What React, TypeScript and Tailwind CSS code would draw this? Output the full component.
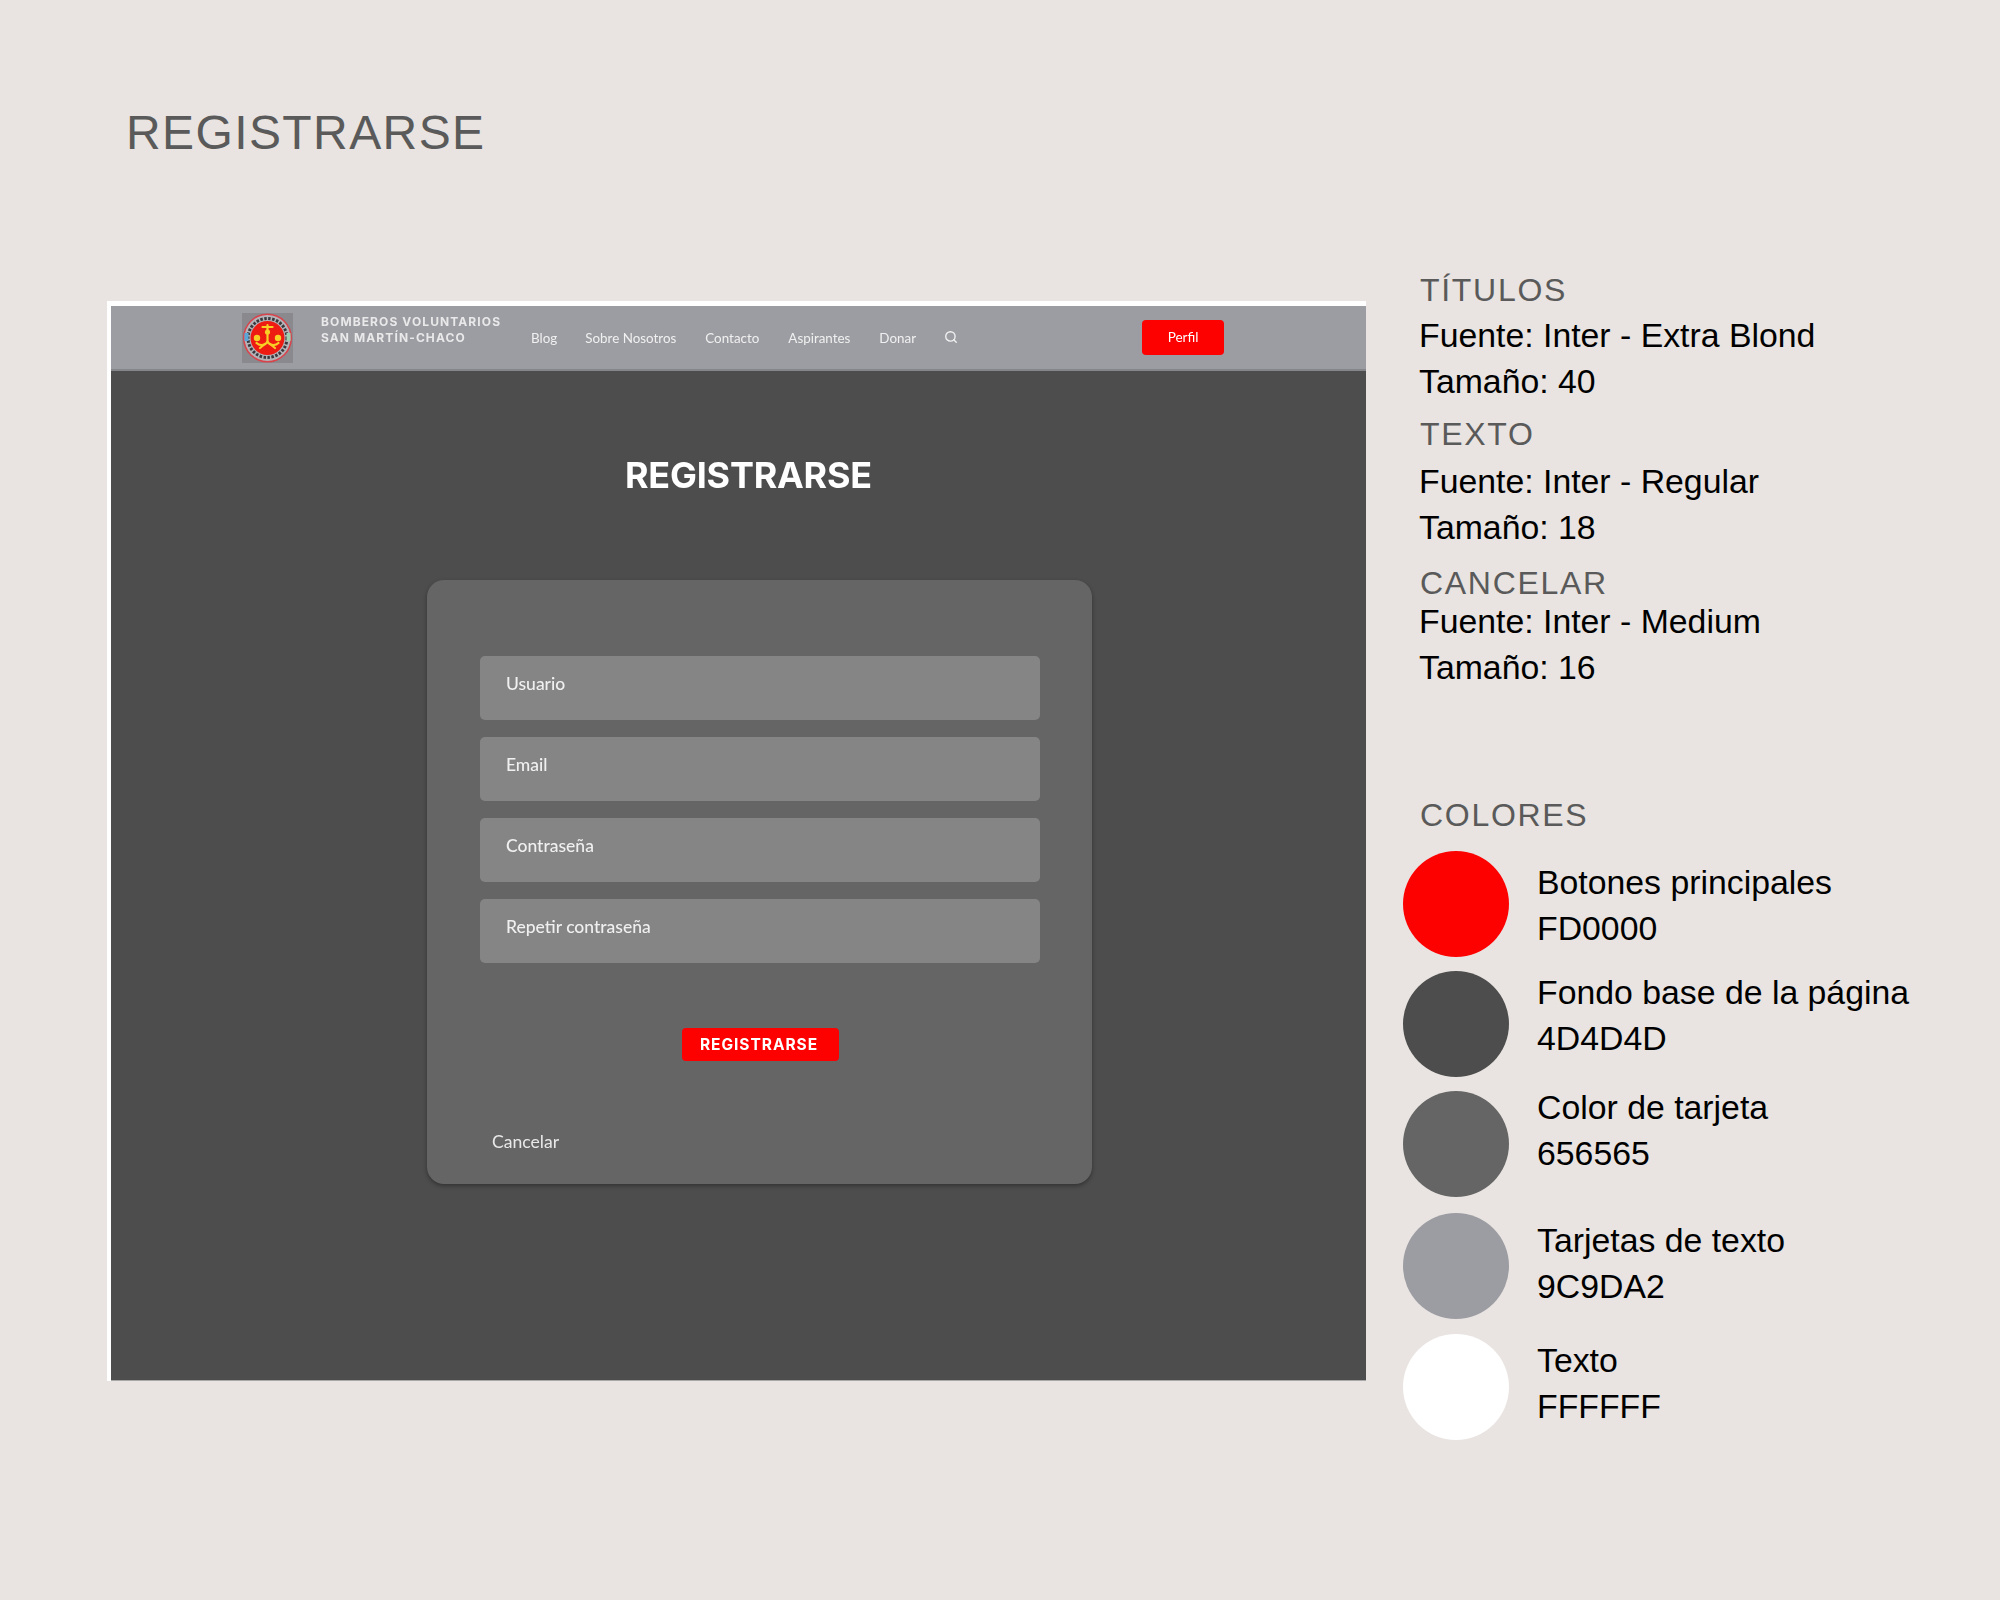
import React from "react";
import { Search } from "lucide-react";

const navLinks = [
  { t: "Blog", c: "ml-[20px]" },
  { t: "Sobre Nosotros", c: "ml-[28px]" },
  { t: "Contacto", c: "ml-[29px]" },
  { t: "Aspirantes", c: "ml-[29px]" },
  { t: "Donar", c: "ml-[29px]" },
];

const fields = ["Usuario", "Email", "Contraseña", "Repetir contraseña"];

const specs = [
  { h: "TÍTULOS", a: "Fuente: Inter - Extra Blond", b: "Tamaño: 40", c: "-mt-[2px]", l: "leading-[44px]" },
  { h: "TEXTO", a: "Fuente: Inter - Regular", b: "Tamaño: 18", c: "mt-[6px]", l: "leading-[48px]" },
  { h: "CANCELAR", a: "Fuente: Inter - Medium", b: "Tamaño: 16", c: "mt-[18px]", l: "leading-[30px]" },
];

const colors = [
  { bg: "bg-[#fd0000]", a: "Botones principales", b: "FD0000", c: "mt-[14px]", t: "mt-[2px]" },
  { bg: "bg-[#4d4d4d]", a: "Fondo base de la página", b: "4D4D4D", c: "mt-[14px]", t: "-mt-[18px]" },
  { bg: "bg-[#656565]", a: "Color de tarjeta", b: "656565", c: "mt-[14px]", t: "-mt-[28px]" },
  { bg: "bg-[#9c9da2]", a: "Tarjetas de texto", b: "9C9DA2", c: "mt-[16px]", t: "-mt-[6px]" },
  { bg: "bg-white", a: "Texto", b: "FFFFFF", c: "mt-[15px]", t: "-mt-[9px]" },
];

function Logo() {
  return (
    <svg width="51" height="50" viewBox="0 0 51 50" className="shrink-0">
      <rect width="51" height="50" fill="#8a8a8e" />
      <circle cx="25.5" cy="25" r="24.5" fill="#d8434c" />
      <circle cx="25.5" cy="25" r="23" fill="#b4b3b7" />
      <circle cx="25.5" cy="25" r="19.5" fill="none" stroke="#3a383c" strokeWidth="3" strokeDasharray="2.5 1.5" />
      <path d="M2.5 20 h4 v8 h-4z" fill="#5aa6d8" />
      <path d="M44.5 20 h4 v8 h-4z" fill="#9fd0b0" />
      <circle cx="25.5" cy="25" r="17" fill="#ee1b13" />
      <g fill="none" stroke="#f7cf25" strokeWidth="2.2" strokeLinecap="round">
        <path d="M20.5 14 h10" />
        <path d="M25.5 12 v17" />
        <path d="M25.5 29 c-3 4 -8 4 -11 1" />
        <path d="M25.5 29 c3 4 8 4 11 1" />
        <path d="M23 31 l-5 4 M28 31 l5 4" />
      </g>
      <circle cx="15" cy="25" r="3.2" fill="#f7cf25" />
      <circle cx="36" cy="25" r="3.2" fill="#f7cf25" />
      <circle cx="25.5" cy="19" r="2.6" fill="#f7cf25" />
    </svg>
  );
}

function Mockup() {
  return (
    <div className="w-[1259px] h-[1080px] bg-white pl-[4px] pt-[5px] flex flex-col font-['Lato',sans-serif] text-white">
      <div className="h-[65px] bg-[#9c9da2] border-b-[2px] border-[#85868a] flex items-center shrink-0 blur-[0.6px]">
        <div className="ml-[131px]"><Logo /></div>
        <div className="ml-[28px] -mt-[15px] w-[190px] font-['Inter',sans-serif] font-bold text-[12px] leading-[16px] tracking-[1.1px] text-[#e9e9ea] whitespace-nowrap">
          <div>BOMBEROS VOLUNTARIOS</div>
          <div>SAN MARTÍN-CHACO</div>
        </div>
        <div className="flex items-center text-[13.4px] mt-[1px] text-[#f0f0f0] whitespace-nowrap">
          {navLinks.map((n) => (
            <span key={n.t} className={n.c}>{n.t}</span>
          ))}
          <Search size={14} strokeWidth={2.4} className="ml-[28px] -mt-[1px]" />
        </div>
        <div className="ml-[184px] w-[82px] h-[35px] rounded-[4px] bg-[#fd0000] flex items-center justify-center text-[13.5px]">
          Perfil
        </div>
      </div>
      <div className="flex-1 bg-[#4d4d4d] border-b-[1px] border-[#a8a8a8] flex flex-col blur-[0.5px]">
        <h2 className="mt-[83px] ml-[514px] h-[42px] leading-[42px] font-['Inter',sans-serif] font-bold text-[35.9px] tracking-[-0.2px] text-white whitespace-nowrap">
          REGISTRARSE
        </h2>
        <div className="mt-[84px] ml-[316px] w-[665px] h-[604px] rounded-[17px] bg-[#656565] shadow-[0_2px_4px_rgba(0,0,0,0.35)] pt-[76px] pl-[53px] flex flex-col">
          <div className="flex flex-col gap-[17px]">
            {fields.map((f) => (
              <div key={f} className="w-[560px] h-[64px] rounded-[5px] bg-[#858585] pl-[26px] pt-[16px] text-[17.5px] leading-[24px] font-medium text-[#f0f0f0]">
                {f}
              </div>
            ))}
          </div>
          <div className="mt-[65px] ml-[202px] w-[157px] h-[33px] rounded-[4px] bg-[#fd0000] pr-[3px] pt-[1px] flex items-center justify-center font-['Inter',sans-serif] font-bold text-[15.5px] tracking-[0.95px]">
            REGISTRARSE
          </div>
          <div className="mt-[69px] ml-[12px] text-[17.6px] leading-[24px] text-[#e8e8e8]">Cancelar</div>
        </div>
      </div>
    </div>
  );
}

export default function App() {
  return (
    <div className="w-[2000px] h-[1600px] bg-[#e9e4e1] font-['Liberation_Sans',sans-serif] overflow-hidden">
      <h1 className="pt-[105px] pl-[126px] text-[48px] leading-[56px] tracking-[1.4px] text-[#5a5a5a] font-normal">
        REGISTRARSE
      </h1>
      <div className="flex items-start mt-[109px]">
        <div className="ml-[107px] mt-[31px]"><Mockup /></div>
        <div className="ml-[37px] w-[590px]">
          <div className="ml-[17px]">
            {specs.map((s) => (
              <div key={s.h} className={s.c}>
                <div className={`text-[32px] tracking-[1.7px] text-[#5a5a5a] ${s.l}`}>{s.h}</div>
                <div className="-ml-[1px] text-[33.8px] leading-[46px] text-black">{s.a}</div>
                <div className="-ml-[1px] text-[33.8px] leading-[46px] text-black">{s.b}</div>
              </div>
            ))}
            <div className="mt-[105px] text-[32px] leading-[40px] tracking-[1.7px] text-[#5a5a5a]">COLORES</div>
          </div>
          <div className="mt-[16px]">
            {colors.map((c) => (
              <div key={c.b} className={`flex items-center ${c.c}`}>
                <div className={`w-[106px] h-[106px] rounded-full shrink-0 ${c.bg}`} />
                <div className={`ml-[28px] text-[33.8px] leading-[46px] text-black whitespace-nowrap ${c.t}`}>
                  <div>{c.a}</div>
                  <div>{c.b}</div>
                </div>
              </div>
            ))}
          </div>
        </div>
      </div>
    </div>
  );
}
